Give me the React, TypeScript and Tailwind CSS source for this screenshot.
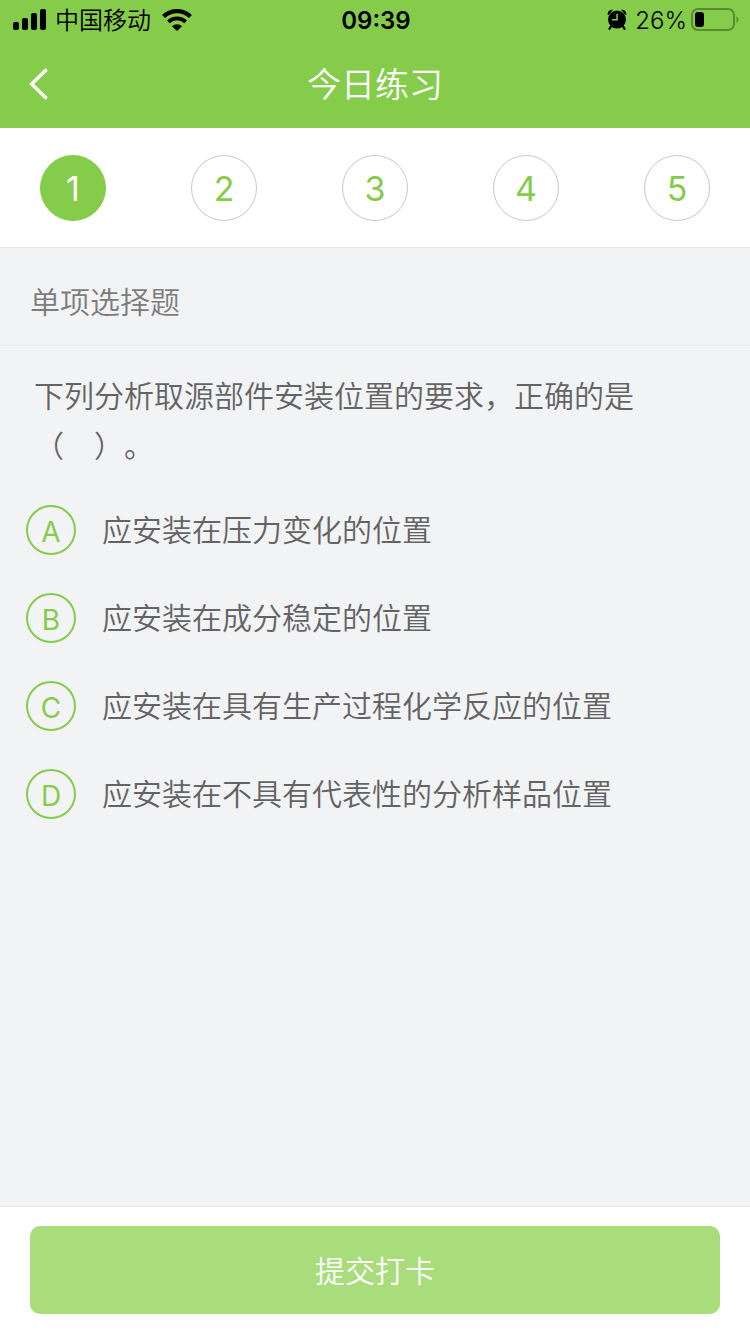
import { useState } from "react"
import clsx from "clsx"

const steps = [1, 2, 3, 4, 5]

const options = [
  { key: "A", text: "应安装在压力变化的位置" },
  { key: "B", text: "应安装在成分稳定的位置" },
  { key: "C", text: "应安装在具有生产过程化学反应的位置" },
  { key: "D", text: "应安装在不具有代表性的分析样品位置" },
]

function SignalIcon() {
  return (
    <svg width="34" height="22" viewBox="0 0 34 22" aria-hidden="true">
      <rect x="0" y="13" width="6" height="8" rx="2" />
      <rect x="9" y="9" width="6" height="12" rx="2" />
      <rect x="18" y="4" width="6" height="17" rx="2" />
      <rect x="27" y="0" width="6" height="21" rx="2" />
    </svg>
  )
}

function WifiIcon() {
  return (
    <svg width="30" height="22" viewBox="0 0 30 22" aria-hidden="true">
      <path d="M1.6 7.6a19 19 0 0 1 26.8 0" fill="none" stroke="currentColor" strokeWidth="4.2" />
      <path d="M6.4 12.9a12.2 12.2 0 0 1 17.2 0" fill="none" stroke="currentColor" strokeWidth="3.8" />
      <path d="M10 17.2a7.2 7.2 0 0 1 10 0l-5 4.8z" />
    </svg>
  )
}

function AlarmIcon() {
  return (
    <svg width="20" height="22" viewBox="0 0 20 22" aria-hidden="true">
      <path d="M.7 5.8C.4 2.6 2.6.3 6 .8L1.6 6zM19.3 5.8c.3-3.2-1.9-5.5-5.3-5L18.4 6z" />
      <path d="M4.2 17 2.4 19.8M15.8 17l1.8 2.8" stroke="currentColor" strokeWidth="2.2" strokeLinecap="round" />
      <circle cx="10" cy="10.6" r="9" />
      <path d="M10 5V10.8H5" fill="none" stroke="#86cc4b" strokeWidth="1.5" />
    </svg>
  )
}

function BatteryIcon() {
  return (
    <svg width="48" height="24" viewBox="0 0 48 24" aria-hidden="true">
      <rect x="1" y="1" width="42" height="21" rx="6" fill="none" stroke="#5a8b32" strokeWidth="2" />
      <rect x="4" y="4" width="9" height="15" rx="3" />
      <path d="M45.5 8.5c2.6 1.2 2.6 5 0 6.2z" fill="#5a8b32" />
    </svg>
  )
}

export default function App() {
  const [step, setStep] = useState(1)
  const [answer, setAnswer] = useState("")

  return (
    <div className="flex min-h-screen flex-col bg-[#f2f3f5] font-['Inter','Noto_Sans_CJK_SC',sans-serif] font-[350] text-[#636363]">
      <header className="bg-[#86cc4b]">
        <div className="grid h-10 grid-cols-3 items-center pr-[11px] pl-[13px] text-2xl text-black">
          <div className="flex items-center gap-2">
            <SignalIcon />
            <span className="pt-0.5 pr-[3px]">中国移动</span>
            <WifiIcon />
          </div>
          <span className="pt-0.5 text-center font-semibold">09:39</span>
          <div className="flex items-center justify-end gap-1">
            <AlarmIcon />
            <span className="pt-0.5 pl-1 font-light">26%</span>
            <BatteryIcon />
          </div>
        </div>
        <div className="grid h-22 grid-cols-[80px_1fr_80px] items-center text-white">
          <button type="button" aria-label="返回" className="flex h-full items-center pl-7">
            <svg width="20" height="32" viewBox="0 0 20 32" fill="none" stroke="currentColor" strokeWidth="3.4" aria-hidden="true">
              <path d="M18.6 1.6 3.6 16l15 14.4" />
            </svg>
          </button>
          <h1 className="pt-0.5 text-center text-[34px] leading-10">今日练习</h1>
        </div>
      </header>

      <nav className="flex justify-between border-b border-[#e6e6e6] bg-white px-10 pt-[27px] pb-[26px]">
        {steps.map((n) => (
          <button
            key={n}
            type="button"
            onClick={() => setStep(n)}
            className={clsx(
              "flex size-[66px] items-center justify-center rounded-full border pt-px text-[34px] leading-10 font-normal",
              n === step ? "border-[#86cc4b] bg-[#86cc4b] text-white" : "border-[#c8c8c8] bg-white text-[#86cc4b]"
            )}
          >
            {n}
          </button>
        ))}
      </nav>

      <h2 className="border-b border-[#e9eaec] px-[30px] pt-[34px] pb-[23px] text-[30px] leading-10 text-[#7c7c7c]">
        单项选择题
      </h2>

      <main className="flex-1 px-[26px] pt-[25px] text-[30px]">
        <fieldset>
          <legend className="px-2 leading-[50px] [text-spacing-trim:space-all]">
            下列分析取源部件安装位置的要求，正确的是
            <span className="whitespace-nowrap">（　）。</span>
          </legend>
          <div className="mt-[34px] flex flex-col gap-[38px]">
            {options.map((option) => (
              <label key={option.key} className="flex cursor-pointer items-center gap-[26px]">
                <input
                  type="radio"
                  name="answer"
                  value={option.key}
                  checked={answer === option.key}
                  onChange={() => setAnswer(option.key)}
                  className="peer sr-only"
                />
                <span className="flex size-[50px] shrink-0 items-center justify-center rounded-full border-2 border-[#86cc4b] pt-[3px] text-[28px] leading-10 font-normal text-[#86cc4b] peer-checked:bg-[#86cc4b] peer-checked:text-white">
                  {option.key}
                </span>
                <span className="leading-10">{option.text}</span>
              </label>
            ))}
          </div>
        </fieldset>
      </main>

      <footer className="border-t border-[#e6e6e6] bg-white px-[30px] pt-[19px] pb-5">
        <button type="button" className="h-22 w-full rounded-[10px] bg-[#a9dc7a] pt-0.5 text-[30px] text-white">
          提交打卡
        </button>
      </footer>
    </div>
  )
}
